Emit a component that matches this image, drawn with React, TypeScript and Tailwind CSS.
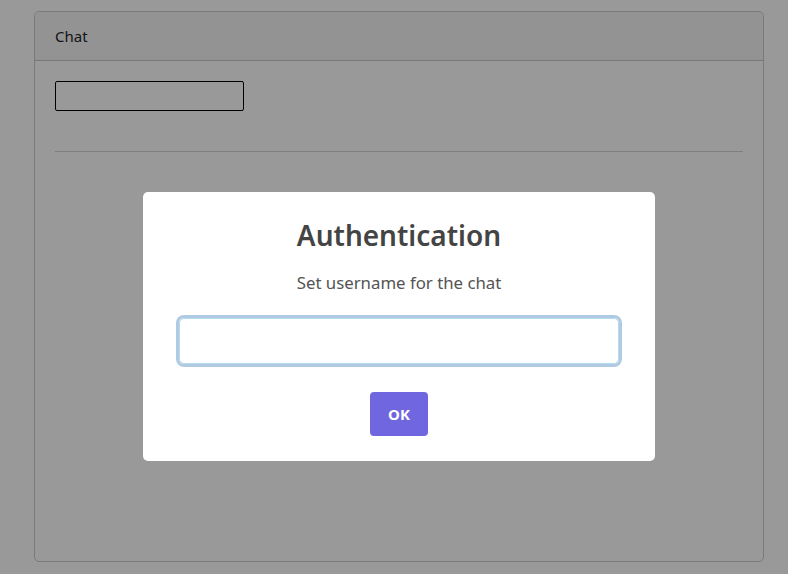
import React, { useState } from 'react';

export default function App() {
  const [name, setName] = useState('');

  return (
    <div className="relative min-h-screen bg-white font-['Noto_Sans',sans-serif] text-[#212529]">
      <div className="pl-[34px] pr-[24px] pt-[11px]">
        <div className="h-[551px] rounded-[5px] border border-[#cccccc] flex flex-col">
          <div className="h-[49px] border-b border-[#c8c8c8] bg-[#f6f6f6] px-[20px] flex items-center text-[15px] rounded-t-[5px]">
            Chat
          </div>
          <div className="px-[20px] pt-[20px]">
            <input className="w-[189px] h-[30px] border border-black rounded-[2px] bg-white" />
            <hr className="mt-[40px] border-0 border-t border-[#d4d4d4]" />
          </div>
        </div>
      </div>

      <div className="absolute inset-0 bg-black/40 flex items-start justify-start pt-[192px] pl-[143px]">
        <div className="w-[512px] h-[269px] bg-white rounded-[5px] flex flex-col items-center">
          <h2 className="mt-[24px] text-[28px] leading-[38px] font-semibold text-[#444444]">Authentication</h2>
          <p className="mt-[17px] text-[16.8px] leading-[24px] text-[#545454]">Set username for the chat</p>
          <input
            autoFocus
            value={name}
            onChange={(e) => setName(e.target.value)}
            className="mt-[23px] w-[440px] h-[46px] rounded-[5px] border border-[#b4dbed] shadow-[0_0_0_3px_rgba(100,150,200,0.5)] outline-none px-[14px] text-[18px]"
          />
          <button className="mt-[28px] w-[58px] h-[44px] rounded-[4px] bg-[#7066e0] text-white font-bold text-[15px]">
            OK
          </button>
        </div>
      </div>
    </div>
  );
}
